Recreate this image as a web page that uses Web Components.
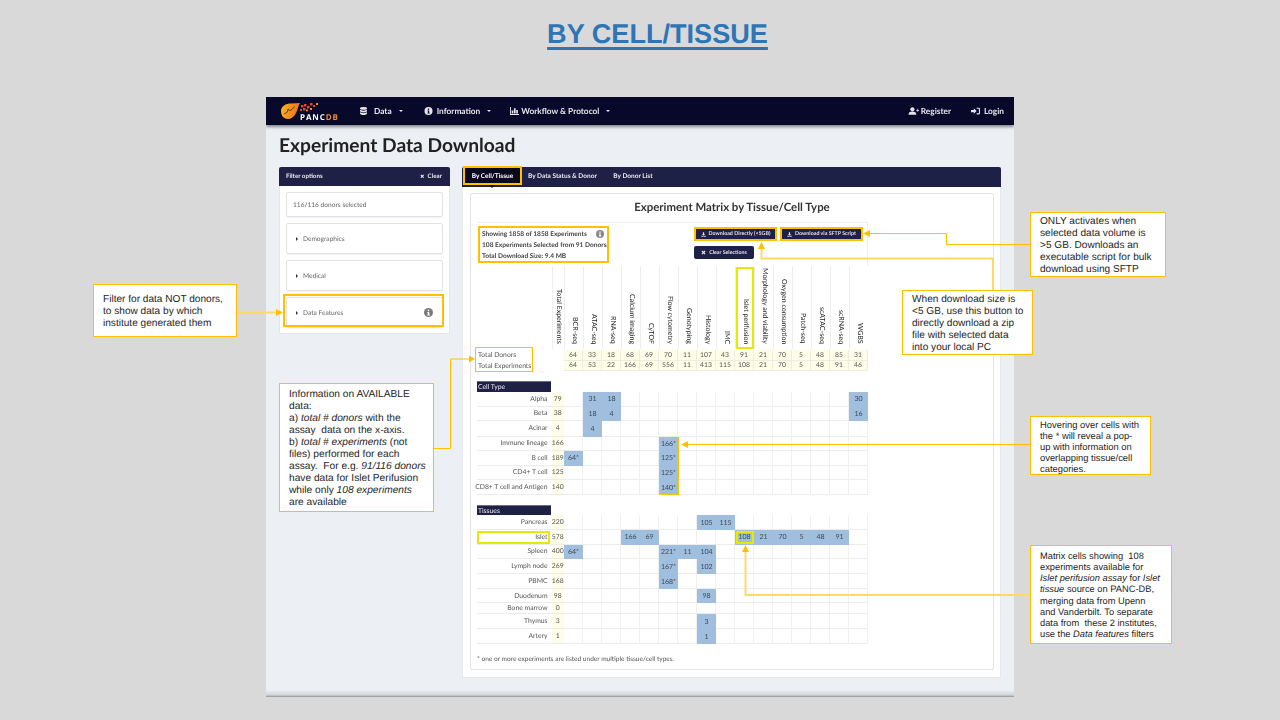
<!DOCTYPE html>
<html lang="en">
<head>
<meta charset="utf-8">
<title>By Cell/Tissue</title>
<style>
	html, body { margin: 0; padding: 0; background: #d9d9d9; }
</style>
</head>
<body>
<pdb-slide>
	<span slot="title">BY CELL/TISSUE</span>
	<pdb-window slot="window"></pdb-window>

	<pdb-mark slot="overlay" x="463" y="166" w="59" h="19"></pdb-mark>
	<pdb-mark slot="overlay" x="478" y="226" w="131" h="37"></pdb-mark>
	<pdb-mark slot="overlay" x="283" y="294" w="161" h="33"></pdb-mark>
	<pdb-mark slot="overlay" x="694" y="227" w="83" h="14"></pdb-mark>
	<pdb-mark slot="overlay" x="780" y="227" w="83" h="14"></pdb-mark>
	<pdb-mark slot="overlay" x="475" y="347" w="58" h="25" thin></pdb-mark>
	<pdb-mark slot="overlay" x="736" y="267" w="18" h="82" color="#e8e800"></pdb-mark>
	<pdb-mark slot="overlay" x="659" y="437" w="20" h="58" thin></pdb-mark>
	<pdb-mark slot="overlay" x="477" y="531" w="73" h="13" color="#e8e800"></pdb-mark>
	<pdb-mark slot="overlay" x="736" y="531" w="18" h="13" color="#e8e800"></pdb-mark>

	<pdb-connectors slot="overlay"></pdb-connectors>

	<pdb-callout slot="overlay" x="93" y="284" w="144" h="53" size="10.1" line="12" top="3">Filter for data NOT donors,<br>to show data by which<br>institute generated them</pdb-callout>
	<pdb-callout slot="overlay" x="279" y="383" w="155" h="129" size="10.2" line="12" top="2">Information on AVAILABLE<br>data:<br>a) <i>total # donors</i> with the<br>assay&nbsp; data on the x-axis.<br>b) <i>total # experiments</i> (not<br>files) performed for each<br>assay.&nbsp; For e.g. <i>91/116 donors</i><br>have data for Islet Perifusion<br>while only <i>108 experiments</i><br>are available</pdb-callout>
	<pdb-callout slot="overlay" x="1030" y="212" w="136" h="65" size="10.1" line="12" top="3">ONLY activates when<br>selected data volume is<br>&gt;5 GB. Downloads an<br>executable script for bulk<br>download using SFTP</pdb-callout>
	<pdb-callout slot="overlay" x="902" y="290" w="131" h="65" size="10.1" line="12" top="2">When download size is<br>&lt;5 GB, use this button to<br>directly download a zip<br>file with selected data<br>into your local PC</pdb-callout>
	<pdb-callout slot="overlay" x="1030" y="416" w="121" h="59" size="9.4" line="11.2" top="2">Hovering over cells with<br>the * will reveal a pop-<br>up with information on<br>overlapping tissue/cell<br>categories.</pdb-callout>
	<pdb-callout slot="overlay" x="1030" y="545" w="142" h="99" size="9.3" line="11.2" top="2">Matrix cells showing&nbsp; 108<br>experiments available for<br><i>Islet perifusion assay</i> for <i>Islet</i><br><i>tissue</i> source on PANC-DB,<br>merging data from Upenn<br>and Vanderbilt. To separate<br>data from&nbsp; these 2 institutes,<br>use the <i>Data features</i> filters</pdb-callout>
</pdb-slide>

<script>
const INFO_ICON = `<svg viewBox="0 0 16 16"><circle cx="8" cy="8" r="8" fill="currentColor"/><rect x="6.6" y="3" width="2.8" height="2.6" fill="var(--hole,#fff)"/><path d="M5.8 7h3.6v4.6h1v1.6H5.8v-1.6h1V8.6h-1z" fill="var(--hole,#fff)"/></svg>`
const DOWNLOAD_ICON = `<svg viewBox="0 0 16 16" fill="currentColor"><path d="M6 1h4v6h3.2L8 12.2 2.8 7H6z"/><path d="M1 12h3.6L8 14l3.4-2H15v3.4H1z"/></svg>`
const TIMES_ICON = `<svg viewBox="0 0 16 16" fill="none" stroke="currentColor" stroke-width="4"><path d="M3 3l10 10M13 3L3 13"/></svg>`

const slideTemplate = document.createElement('template')
slideTemplate.innerHTML = `
	<style>
		:host {
			display: flex;
			flex-direction: column;
			align-items: center;
			position: relative;
			width: 1280px;
			height: 720px;
			overflow: hidden;
			background: #d9d9d9;
			text-rendering: geometricPrecision;
		}
		h1 {
			margin: 17px 0 0 35px;
			height: 80px;
			font: bold 27.100px/34px "Liberation Sans", Arial, sans-serif;
			color: #2e75b6;
			text-decoration: underline;
			text-decoration-thickness: 3px;
			text-underline-offset: 4px;
		}
	</style>
	<h1><slot name="title"></slot></h1>
	<slot name="window"></slot>
	<slot name="overlay"></slot>
`
class PdbSlide extends HTMLElement {
	constructor() {
		super()
		this.attachShadow({ mode: 'open' }).appendChild(slideTemplate.content.cloneNode(true))
	}
}

const windowTemplate = document.createElement('template')
windowTemplate.innerHTML = `
	<style>
		:host {
			display: block;
			width: 748px;
			height: 600px;
			background: linear-gradient(#dfe3e7, #ecf0f5 12px);
			font-family: Lato, sans-serif;
			color: #333;
			overflow: hidden;
			position: relative;
			filter: blur(.3px);
		}
		:host::after {
			content: "";
			position: absolute;
			left: 0; right: 0; bottom: 0;
			height: 7px;
			background: linear-gradient(#ecf0f5, #d2d6da 70%, #8f9397);
		}
		h2 {
			margin: 0;
			padding: 9px 0 0 13px;
			height: 33px;
			box-sizing: content-box;
			font: 700 19.200px/24px Lato, sans-serif;
			color: #222;
		}
		.columns {
			display: flex;
			align-items: flex-start;
			gap: 12px;
			padding: 0 13px;
		}
	</style>
	<pdb-navbar></pdb-navbar>
	<h2>Experiment Data Download</h2>
	<div class="columns">
		<pdb-filter-panel></pdb-filter-panel>
		<pdb-results></pdb-results>
	</div>
`
class PdbWindow extends HTMLElement {
	constructor() {
		super()
		this.attachShadow({ mode: 'open' }).appendChild(windowTemplate.content.cloneNode(true))
	}
}

const navTemplate = document.createElement('template')
navTemplate.innerHTML = `
	<style>
		:host {
			display: flex;
			align-items: center;
			height: 28px;
			background: #08082a;
			box-shadow: 0 2px 3px rgba(0,0,0,.45);
			color: #e4e4ea;
			font: 700 8.300px/10px Lato, sans-serif;
			position: relative;
		}
		.logo { width: 58px; height: 26px; margin-left: 13px; position: relative; flex: none; }
		.logo svg { position: absolute; left: 0; top: 0; width: 58px; height: 26px; }
		.logo span {
			position: absolute; left: 21px; top: 14.500px;
			font: 700 8px/9px "Open Sans", sans-serif;
			letter-spacing: .9px; color: #fff;
		}
		.logo b { color: #f08a2c; font-weight: 700; }
		.item { display: flex; align-items: center; white-space: nowrap; flex: none; }
		.item svg { height: 8px; width: 9px; margin-right: 4px; flex: none; --hole: #08082a; }
		.caret { width: 0; height: 0; border: 2.400px solid transparent; border-top: 2.600px solid #e4e4ea; border-bottom: 0; margin-left: 7px; }
		.grow { flex: 1; }
	</style>
	<div class="logo">
		<svg viewBox="0 0 58 26">
			<defs><linearGradient id="g" x1="0" y1="0" x2="1" y2=".2"><stop offset="0" stop-color="#f9b81c"/><stop offset="1" stop-color="#f0701e"/></linearGradient></defs>
			<path d="M2 13C2 8 7 5.500 12 5.500L21 5C19 8 19 11 17 15C15 19 12 21 9 21C5 21 2 18 2 13z" fill="url(#g)"/>
			<path d="M5 16l3.500-2 .5-3 2 1.500 2-1 2.500-3" fill="none" stroke="#3a2410" stroke-width=".8"/>
			<g fill="#e8452c">
				<rect x="22" y="7" width="2.500" height="2.500"/><rect x="25" y="6" width="2.500" height="2.500"/><rect x="28" y="8" width="2.500" height="2.500"/><rect x="31" y="5" width="2.500" height="2.500"/>
				<rect x="24" y="10" width="2.500" height="2.500"/><rect x="21" y="11" width="2" height="2"/><rect x="34" y="7" width="2" height="2"/>
			</g>
			<g fill="#f28a2e"><rect x="37" y="5" width="2" height="2"/><rect x="31" y="10" width="2" height="2"/><rect x="27" y="11.500" width="1.800" height="1.800"/></g>
		</svg>
		<span>PANC<b>DB</b></span>
	</div>
	<div class="item" style="margin-left:22px"><svg viewBox="0 0 14 16" style="margin-right:6px"><g fill="currentColor"><ellipse cx="7" cy="2.800" rx="7" ry="2.800"/><path d="M0 5.200c1 1.600 4 2.200 7 2.200s6-.6 7-2.200v2.800c0 1.500-3 2.800-7 2.800S0 9.500 0 8z"/><path d="M0 10.200c1 1.600 4 2.200 7 2.200s6-.6 7-2.200V13c0 1.600-3 3-7 3s-7-1.400-7-3z"/></g></svg>Data<i class="caret"></i></div>
	<div class="item" style="margin-left:21px"><span style="display:contents">${INFO_ICON}</span>Information<i class="caret"></i></div>
	<div class="item" style="margin-left:19px"><svg viewBox="0 0 16 14" style="margin-right:2px"><path fill="currentColor" d="M0 0h1.600v12.400H16V14H0zM3 6h3v5.500H3zM7 2h3v9.500H7zM11 5h3v6.500h-3z"/></svg>Workflow &amp; Protocol<i class="caret"></i></div>
	<div class="grow"></div>
	<div class="item"><svg viewBox="0 0 20 14" style="width:11px;margin-right:2px"><g fill="currentColor"><circle cx="8" cy="4" r="3.800"/><path d="M1 14c0-4 2-6 7-6s7 2 7 6z"/><path d="M15 5h2V3h1.500v2H20v1.500h-1.500v2H17v-2h-2z"/></g></svg>Register</div>
	<div class="item" style="margin:0 10px 0 20px"><svg viewBox="0 0 16 14" style="margin-right:4px"><g fill="currentColor"><path d="M0 5h5V2l5 5-5 5V9H0z"/><path d="M10 1h4a2 2 0 0 1 2 2v8a2 2 0 0 1-2 2h-4v-2h4V3h-4z"/></g></svg>Login</div>
`
class PdbNavbar extends HTMLElement {
	constructor() {
		super()
		this.attachShadow({ mode: 'open' }).appendChild(navTemplate.content.cloneNode(true))
	}
}

const filterTemplate = document.createElement('template')
filterTemplate.innerHTML = `
	<style>
		:host {
			display: block;
			flex: none;
			width: 171px;
			height: 167px;
			box-sizing: border-box;
			background: #fff;
			border: 1px solid #e4e6ea;
			border-top: 0;
			border-radius: 2px;
		}
		header {
			display: flex;
			justify-content: space-between;
			align-items: center;
			height: 19px;
			margin: 0 -1px;
			padding: 0 8px 0 7px;
			background: #1e2045;
			color: #e8e8ee;
			font: 700 6.200px/8px Lato, sans-serif;
			border-radius: 2px 2px 0 0;
		}
		header span { display: flex; align-items: center; }
		header svg { width: 4.500px; height: 4.500px; margin-right: 3px; }
		.list { display: flex; flex-direction: column; padding: 6px 6px 0; }
	</style>
	<header><div>Filter options</div><span>${TIMES_ICON}Clear</span></header>
	<div class="list">
		<pdb-filter-item plain h="25">116/116 donors selected</pdb-filter-item>
		<pdb-filter-item h="31" style="margin-top:6px">Demographics</pdb-filter-item>
		<pdb-filter-item h="31" style="margin-top:6px">Medical</pdb-filter-item>
		<pdb-filter-item h="31" info style="margin-top:6px">Data Features</pdb-filter-item>
	</div>
`
class PdbFilterPanel extends HTMLElement {
	constructor() {
		super()
		this.attachShadow({ mode: 'open' }).appendChild(filterTemplate.content.cloneNode(true))
	}
}

class PdbFilterItem extends HTMLElement {
	constructor() {
		super()
		this.attachShadow({ mode: 'open' })
	}
	connectedCallback() {
		const plain = this.hasAttribute('plain')
		this.shadowRoot.innerHTML = `
			<style>
				:host {
					display: flex;
					align-items: center;
					height: ${this.getAttribute('h')}px;
					box-sizing: border-box;
					padding: 0 9px 0 ${plain ? 6 : 9}px;
					border: 1px solid #e2e3e6;
					border-radius: 2px;
					box-shadow: 0 1px 1px rgba(0,0,0,.05);
					font: 6.600px/8px Lato, sans-serif;
					color: #666;
				}
				i { width: 0; height: 0; margin-right: 5px; border: 2px solid transparent; border-left: 2.400px solid #333; border-right: 0; }
				.grow { flex: 1; }
				svg { width: 9px; height: 9px; color: #7a7a7a; }
			</style>
			${plain ? '' : '<i></i>'}<slot></slot>
			${this.hasAttribute('info') ? `<div class="grow"></div>${INFO_ICON}` : ''}
		`
	}
}

const resultsTemplate = document.createElement('template')
resultsTemplate.innerHTML = `
	<style>
		:host { display: block; flex: none; width: 539px; height: 511px; background: #fff; box-sizing: border-box; border: 1px solid #e6e8eb; border-top: 0; }
		nav {
			display: flex;
			height: 20px;
			margin: 0 -1px;
			background: #1e2045;
			border-radius: 2px 2px 0 0;
			color: #e8e8ee;
			font: 700 6.500px/19px Lato, sans-serif;
		}
		nav div { white-space: nowrap; }
		.active { position: relative; background: #08081e; width: 59px; margin-left: 1px; height: 18px; text-align: center; color: #fff; }
		.active::after { content: ""; position: absolute; left: 26px; top: 18px; border: 3px solid transparent; border-top: 3px solid #111; }
		.card {
			margin: 6px 6px 0 7px;
			height: 477px;
			box-sizing: border-box;
			border: 1px solid #e4e5e8;
			border-radius: 2px;
			padding: 7px 0 0 6px;
		}
		h3 { margin: 0 6px 0 0; text-align: center; font: 700 11.400px/14px Lato, sans-serif; color: #333; }
		.top {
			display: flex;
			width: 391px;
			height: 44px;
			box-sizing: border-box;
			margin-top: 7px;
			border-top: 1px solid #eee;
			border-right: 1px solid #eee;
			padding: 3px 0 0 1px;
		}
		.stats { position: relative; width: 131px; height: 37px; box-sizing: border-box; padding: 3px 0 0 4px; font: 700 6.600px/11px Lato, sans-serif; color: #444; white-space: nowrap; }
		.stats svg { position: absolute; left: 118px; top: 4px; width: 8px; height: 8px; color: #888; }
		.actions { display: grid; grid-template-columns: 83px 83px; column-gap: 3px; row-gap: 5px; margin: 1px 0 0 85px; align-content: start; }
		.btn { display: flex; align-items: center; justify-content: center; height: 14px; background: #1e2045; color: #dfe0ea; font: 700 5.300px/8px Lato, sans-serif; white-space: nowrap; border-radius: 1px; }
		.btn svg { width: 5px; height: 5px; margin-right: 3px; flex: none; }
		.clear { width: 60px; height: 13px; border-radius: 2px; }
		.note { margin: 12px 0 0; font: 6.550px/8px Lato, sans-serif; color: #555; }
	</style>
	<nav>
		<div class="active">By Cell/Tissue</div>
		<div style="margin-left:6px">By Data Status &amp; Donor</div>
		<div style="margin-left:16.500px">By Donor List</div>
	</nav>
	<div class="card">
		<h3>Experiment Matrix by Tissue/Cell Type</h3>
		<div class="top">
			<div class="stats">
				Showing 1858 of 1858 Experiments${INFO_ICON}<br>
				108 Experiments Selected from 91 Donors<br>
				Total Download Size: 9.4 MB
			</div>
			<div class="actions">
				<div class="btn">${DOWNLOAD_ICON}Download Directly (&lt;5GB)</div>
				<div class="btn">${DOWNLOAD_ICON}Download via SFTP Script</div>
				<div class="btn clear">${TIMES_ICON}Clear Selections</div>
			</div>
		</div>
		<pdb-matrix></pdb-matrix>
		<div class="note">* one or more experiments are listed under multiple tissue/cell types.</div>
	</div>
`
class PdbResults extends HTMLElement {
	constructor() {
		super()
		this.attachShadow({ mode: 'open' }).appendChild(resultsTemplate.content.cloneNode(true))
	}
}

const ASSAYS = ['BCR-seq', 'ATAC-seq', 'RNA-seq', 'Calcium imaging', 'CyTOF', 'Flow cytometry', 'Genotyping', 'Histology', 'IMC', 'Islet perifusion', 'Morphology and viability', 'Oxygen consumption', 'Patch-seq', 'scATAC-seq', 'scRNA-seq', 'WGBS']
const TOTAL_DONORS = [64, 33, 18, 68, 69, 70, 11, 107, 43, 91, 21, 70, 5, 48, 85, 31]
const TOTAL_EXPERIMENTS = [64, 53, 22, 166, 69, 556, 11, 413, 115, 108, 21, 70, 5, 48, 91, 46]
// rows that open a new group get a heavier line on top
const SEPARATED = ['Immune lineage', 'Lymph node', 'Thymus']
// row: label, total, height, { column index: value }
const CELL_ROWS = [
	['Alpha', 79, 15, { 1: 31, 2: 18, 15: 30 }],
	['Beta', 38, 14.500, { 1: 18, 2: 4, 15: 16 }],
	['Acinar', 4, 15.500, { 1: 4 }],
	['Immune lineage', 166, 14.500, { 5: '166*' }],
	['B cell', 189, 14.500, { 0: '64*', 5: '125*' }],
	['CD4+ T cell', 125, 14.500, { 5: '125*' }],
	['CD8+ T cell and Antigen', 140, 15, { 5: '140*' }]
]
const TISSUE_ROWS = [
	['Pancreas', 220, 15, { 7: 105, 8: 115 }],
	['Islet', 578, 14.500, { 3: 166, 4: 69, 9: 108, 10: 21, 11: 70, 12: 5, 13: 48, 14: 91 }],
	['Spleen', 400, 14.500, { 0: '64*', 5: '221*', 6: 11, 7: 104 }],
	['Lymph node', 269, 15, { 5: '167*', 7: 102 }],
	['PBMC', 168, 15, { 5: '168*' }],
	['Duodenum', 98, 14, { 7: 98 }],
	['Bone marrow', 0, 11, {}],
	['Thymus', 3, 15, { 7: 3 }],
	['Artery', 1, 15, { 7: 1 }]
]

const matrixStyle = `
	<style>
		:host { display: block; width: 391px; font: 6.800px/1 Lato, sans-serif; color: #555; }
		.row { display: grid; grid-template-columns: 74.500px 12.500px repeat(16, 19px); }
		.row > div { display: flex; align-items: center; justify-content: center; box-sizing: border-box; padding-top: 1px; border-bottom: 1px solid #ececec; border-right: 1px solid #f0f0f0; min-width: 0; white-space: nowrap; }
		.row > .label { justify-content: flex-end; padding-right: 4px; border-right: 0; border-bottom: 1px solid #ececec; }
		.row > .sum { background: #fdfde8; border-right: 0; }
		.row > .on { background: #a0bedd; color: #3c4a5a; border-right: 0; border-bottom: 0; font-size: 7px; }
		.sep { box-shadow: 0 -1px 0 #dcdcdc; }
		.head { height: 83px; margin-bottom: 1px; }
		.head > div { border-bottom: 0; border-left: 1px solid #eee; border-right: 0; border-top: 0; padding-top: 0; align-items: flex-end; justify-content: center; padding-bottom: 5px; }
		.head > .none { border: 0; }
		.head span { writing-mode: vertical-rl; color: #222; font-size: 7px; }
		.totals { height: 10.500px; }
		.totals > div { background: #fdfde8; border: 1px solid #ecece0; border-width: 0 1px 1px 0; }
		.totals > .label { background: none; justify-content: flex-start; padding-left: 1px; font-size: 6.800px; border: 0; }
		.totals > .none { background: none; border: 0; }
		.bar { width: 74px; height: 10.500px; box-sizing: border-box; padding-left: 1px; background: #1e2045; color: #e8e8ee; font: 6.800px/10.500px Lato, sans-serif; border: 1px solid #6a6c8a; border-width: 1px 0 0 0; }
	</style>
`
class PdbMatrix extends HTMLElement {
	constructor() {
		super()
		this.attachShadow({ mode: 'open' })
	}
	rows(list) {
		return list.map(([label, total, height, values]) => `
			<div class="row${SEPARATED.includes(label) ? ' sep' : ''}" style="height:${height}px">
				<div class="label">${label}</div>
				<div class="sum">${total}</div>
				${ASSAYS.map((a, i) => values[i] !== undefined ? `<div class="on">${values[i]}</div>` : '<div></div>').join('')}
			</div>`).join('')
	}
	connectedCallback() {
		this.shadowRoot.innerHTML = `${matrixStyle}
			<div class="row head">
				<div class="none"></div>
				<div><span>Total Experiments</span></div>
				${ASSAYS.map(a => `<div><span>${a}</span></div>`).join('')}
			</div>
			<div class="row totals"><div class="label">Total Donors</div><div class="none"></div>${TOTAL_DONORS.map(n => `<div>${n}</div>`).join('')}</div>
			<div class="row totals"><div class="label">Total Experiments</div><div class="none"></div>${TOTAL_EXPERIMENTS.map(n => `<div>${n}</div>`).join('')}</div>
			<div class="bar" style="margin-top:10px">Cell Type</div>
			${this.rows(CELL_ROWS)}
			<div class="bar" style="margin-top:9.500px">Tissues</div>
			${this.rows(TISSUE_ROWS)}
		`
	}
}

// overlay annotations sit on the slide, so they take slide coordinates
class PdbCallout extends HTMLElement {
	constructor() {
		super()
		this.attachShadow({ mode: 'open' })
	}
	connectedCallback() {
		const a = n => this.getAttribute(n)
		this.shadowRoot.innerHTML = `
			<style>
				:host {
					display: flex;
					align-items: center;
					position: absolute;
					left: ${a('x')}px; top: ${a('y')}px;
					width: ${a('w')}px; height: ${a('h')}px;
					box-sizing: border-box;
					padding: ${a('top')}px 0 0 9px;
					background: #fff;
					border: 1px solid #ffc000;
					font: ${a('size')}px/${a('line')}px "Liberation Sans", Arial, sans-serif;
					color: #262626;
					white-space: nowrap;
				}
			</style>
			<div><slot></slot></div>
		`
	}
}

class PdbMark extends HTMLElement {
	constructor() {
		super()
		this.attachShadow({ mode: 'open' })
	}
	connectedCallback() {
		const a = n => this.getAttribute(n)
		this.shadowRoot.innerHTML = `
			<style>
				:host {
					display: block;
					position: absolute;
					left: ${a('x')}px; top: ${a('y')}px;
					width: ${a('w')}px; height: ${a('h')}px;
					box-sizing: border-box;
					border: ${this.hasAttribute('thin') ? 1 : 2}px solid ${a('color') || '#ffc000'};
				}
			</style>
		`
	}
}

const connectorTemplate = document.createElement('template')
connectorTemplate.innerHTML = `
	<style>
		:host { display: block; position: absolute; left: 0; top: 0; width: 1280px; height: 720px; pointer-events: none; }
		svg { display: block; }
	</style>
	<svg width="1280" height="720" viewBox="0 0 1280 720" fill="none">
		<g stroke="#ffd966" stroke-width="2">
			<path d="M237 312.500H278"/>
			<path d="M993 290V258.500H761.500V247"/>
			<path d="M1030 595H745.500V550"/>
		</g>
		<g stroke="#ffc000" stroke-width="1">
			<path d="M434 448.500H450.500V359H470"/>
			<path d="M1030 244.500H946.500V233.500H868"/>
			<path d="M1030 444.500H686"/>
		</g>
		<g fill="#ffc000">
			<path d="M283 312.500l-7-3.500v7z"/>
			<path d="M475 359l-6-3.500v7z"/>
			<path d="M863 233.500l7-3.500v7z"/>
			<path d="M761.500 242l-3.500 7h7z"/>
			<path d="M681 444.500l7-3.500v7z"/>
			<path d="M745.500 545l-3.500 7h7z"/>
		</g>
	</svg>
`
class PdbConnectors extends HTMLElement {
	constructor() {
		super()
		this.attachShadow({ mode: 'open' }).appendChild(connectorTemplate.content.cloneNode(true))
	}
}

customElements.define('pdb-slide', PdbSlide)
customElements.define('pdb-window', PdbWindow)
customElements.define('pdb-navbar', PdbNavbar)
customElements.define('pdb-filter-panel', PdbFilterPanel)
customElements.define('pdb-filter-item', PdbFilterItem)
customElements.define('pdb-results', PdbResults)
customElements.define('pdb-matrix', PdbMatrix)
customElements.define('pdb-callout', PdbCallout)
customElements.define('pdb-mark', PdbMark)
customElements.define('pdb-connectors', PdbConnectors)
</script>
</body>
</html>
